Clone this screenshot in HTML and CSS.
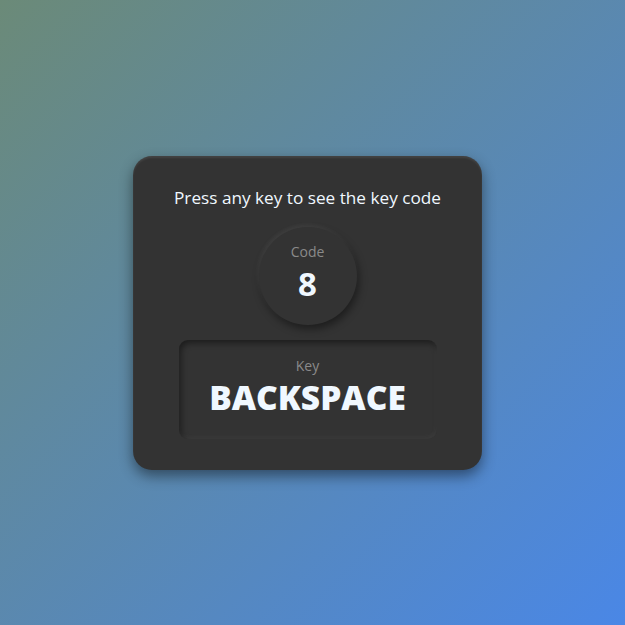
FILE: index.html
```html
<!DOCTYPE html>
<html lang="en">
<head>
<meta charset="utf-8">
<title>Key Code</title>
<link rel="stylesheet" href="styles.css">
</head>
<body>
  <div class="card">
    <p class="title">Press any key to see the key code</p>
    <div class="code">
      <span class="label">Code</span>
      <span class="value">8</span>
    </div>
    <div class="key">
      <span class="label">Key</span>
      <span class="value">BACKSPACE</span>
    </div>
  </div>
</body>
</html>
```

FILE: styles.css
```css
html, body {
  margin: 0;
  height: 100%;
}
body {
  box-sizing: border-box;
  padding-right: 10px;
  display: flex;
  align-items: center;
  justify-content: center;
  background: linear-gradient(135deg, #6b8a78 0%, #4a87e6 100%);
  font-family: "Open Sans", "Liberation Sans", sans-serif;
  color: #f0f8ff;
}
.card {
  box-sizing: border-box;
  width: 349px;
  height: 314px;
  padding: 30px 20px 30px;
  background: #333333;
  border-radius: 19px;
  box-shadow: 0 6px 14px rgba(0, 0, 0, 0.45), inset 0 2px 2px rgba(255, 255, 255, 0.08);
  display: flex;
  flex-direction: column;
  align-items: center;
}
.card > * {
  flex-shrink: 0;
}
.title {
  margin: 0;
  font-size: 17.2px;
  line-height: 24px;
  white-space: nowrap;
  text-align: center;
}
.code {
  box-sizing: border-box;
  margin-top: 17px;
  padding-top: 17px;
  width: 98px;
  height: 98px;
  border-radius: 50%;
  background: #333333;
  box-shadow: 2px 4px 8px rgba(0, 0, 0, 0.45), -1px -2px 4px rgba(255, 255, 255, 0.08);
  display: flex;
  flex-direction: column;
  align-items: center;
}
.label {
  font-size: 14px;
  line-height: 16px;
  color: #8a8a8a;
}
.code .value {
  font-size: 33px;
  line-height: 36px;
  font-weight: 700;
  margin-top: 6px;
}
.key {
  box-sizing: border-box;
  margin-top: 15px;
  padding-top: 18px;
  width: 258px;
  height: 99px;
  border-radius: 9px;
  background: #333333;
  box-shadow: inset 2px 3px 6px rgba(0, 0, 0, 0.45), inset -1px -2px 4px rgba(255, 255, 255, 0.06);
  display: flex;
  flex-direction: column;
  align-items: center;
}
.key .value {
  font-size: 33.5px;
  line-height: 40px;
  font-weight: 800;
  margin-top: 3px;
}
```
